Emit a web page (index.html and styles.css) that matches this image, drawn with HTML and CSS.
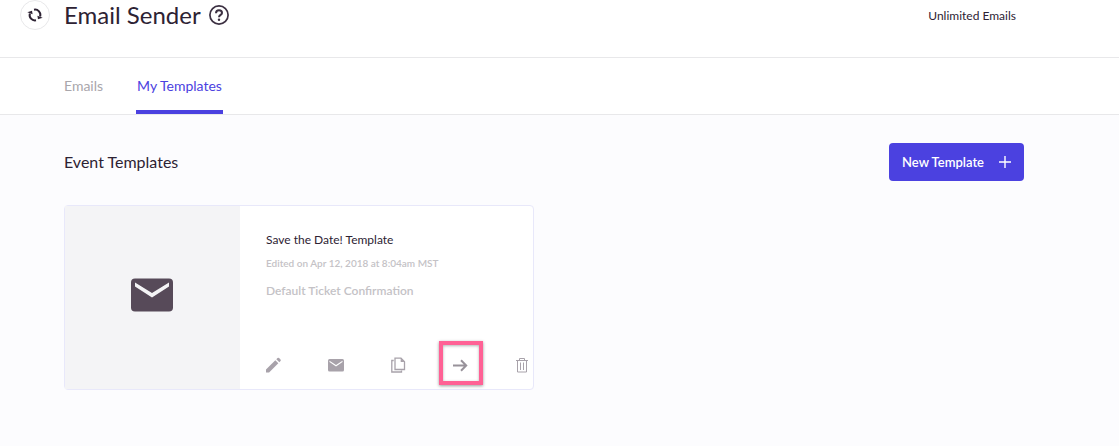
FILE: index.html
```html
<!DOCTYPE html>
<html lang="en">
<head>
    <meta charset="UTF-8">
    <meta name="viewport" content="width=device-width, initial-scale=1.0">
    <title>Email Sender</title>
    <link rel="stylesheet" href="styles.css">
</head>
<body>
    <!-- Header -->
    <header class="header">
        <button class="refresh-btn" aria-label="Refresh">
            <svg width="16" height="14" viewBox="0 0 16 14" fill="none" stroke="#2d2233" stroke-width="2">
                <path d="M9 12.300A5.300 5.300 0 0 1 2.900 5.500"/>
                <path d="M7 1.700A5.300 5.300 0 0 1 13.100 8.500"/>
                <path d="M.3 4.300 5 2.800 5.600 6.300z" fill="#2d2233" stroke="none"/>
                <path d="M15.700 9.700 11 11.200 10.400 7.700z" fill="#2d2233" stroke="none"/>
            </svg>
        </button>
        <h1>Email Sender</h1>
        <button class="help-btn" aria-label="Help">
            <svg width="20" height="20" viewBox="0 0 20 20" fill="none" stroke="#3c3042">
                <circle cx="10" cy="10" r="9.100" stroke-width="1.700"/>
                <path d="M7 8.200C7 6.200 8.300 5.300 10 5.300S13 6.300 13 7.900C13 9.800 10 10 10 12.200" stroke-width="2"/>
                <circle cx="10" cy="14.700" r="1.200" fill="#3c3042" stroke="none"/>
            </svg>
        </button>
        <span class="quota">Unlimited Emails</span>
    </header>

    <!-- Tabs -->
    <nav class="tabs">
        <a href="#emails">Emails</a>
        <a href="#templates" class="active">My Templates</a>
    </nav>

    <!-- Templates -->
    <main class="content">
        <div class="content-top">
            <h2>Event Templates</h2>
            <button class="new-btn">
                New Template
                <svg width="12" height="12" viewBox="0 0 12 12" stroke="#fff" stroke-width="1.400">
                    <path d="M6 0v12M0 6h12"/>
                </svg>
            </button>
        </div>

        <article class="card">
            <div class="card-preview">
                <svg width="42" height="34" viewBox="0 0 42 34">
                    <rect y=".5" width="42" height="33" rx="4" fill="#574a59"/>
                    <path d="M4 4.500 21 15 38 4.500V8.500L21 19.500 4 8.500z" fill="#f4f4f6"/>
                </svg>
            </div>
            <div class="card-body">
                <h3>Save the Date! Template</h3>
                <p class="edited">Edited on Apr 12, 2018 at 8:04am MST</p>
                <p class="type">Default Ticket Confirmation</p>
                <div class="actions">
                    <button aria-label="Edit">
                        <svg width="16" height="16" viewBox="0 0 16 16" fill="#a8a2aa">
                            <path d="M0 12.400 9.300 3.200 12.300 6.200 3.100 15.500H0z"/>
                            <path d="M10.300 2.200 11.500 1Q12.300.3 13.100 1L14.500 2.400Q15.200 3.200 14.500 4L13.300 5.200z"/>
                        </svg>
                    </button>
                    <button aria-label="Send">
                        <svg width="16" height="16" viewBox="0 0 16 16">
                            <rect x="0" y="2" width="16" height="12.500" rx="1.500" fill="#a8a2aa"/>
                            <path d="M1.500 3.700 8 8 14.500 3.700V5L8 9.400 1.500 5z" fill="#fff"/>
                        </svg>
                    </button>
                    <button aria-label="Duplicate">
                        <svg width="16" height="16" viewBox="0 0 16 16" fill="none" stroke="#a8a2aa" stroke-width="1.300">
                            <path d="M5 1.200H11L14.500 4.700V12.500H5z"/>
                            <path d="M10.700 1.200 14.500 5H10.700z" fill="#a8a2aa" stroke="none"/>
                            <path d="M3.700 3.500H1.800V15H11.500V13.500"/>
                        </svg>
                    </button>
                    <button class="highlighted" aria-label="Move">
                        <svg width="16" height="16" viewBox="0 0 16 16" fill="none" stroke="#98929a" stroke-width="2">
                            <path d="M1 8.500H14M9 3.300 14.200 8.500 9 13.700"/>
                        </svg>
                    </button>
                    <button aria-label="Delete">
                        <svg width="16" height="16" viewBox="0 0 16 16" fill="none" stroke="#a8a2aa">
                            <path d="M2 3.500H14M5.500 3V1.500H10.500V3M3.500 4V15H12.500V4M6.500 5.500V13M9.500 5.500V13"/>
                        </svg>
                    </button>
                </div>
            </div>
        </article>
    </main>
</body>
</html>
```

FILE: styles.css
```css
* {
    box-sizing: border-box;
}

body {
    margin: 0;
    min-height: 100vh;
    background: #fcfcfe;
    color: #2d2233;
    font-family: Lato, "Liberation Sans", sans-serif;
}

h1,
h2,
h3,
p {
    margin: 0;
    font-weight: 400;
}

button {
    padding: 0;
    border: none;
    background: none;
    font-family: inherit;
    cursor: pointer;
}

svg {
    display: block;
}

/* Header */
.header {
    display: flex;
    align-items: center;
    padding: 0 103px 27px 20px;
    background: #fff;
    border-bottom: 1px solid #e8e8ea;
}

.refresh-btn {
    display: flex;
    align-items: center;
    justify-content: center;
    width: 30px;
    height: 30px;
    border: 1px solid #e8e8ea;
    border-radius: 50%;
}

.header h1 {
    margin: 0 8px 0 14px;
    font-size: 24px;
    line-height: 30px;
}

.quota {
    margin-left: auto;
    font-size: 12px;
}

/* Tabs */
.tabs {
    display: flex;
    gap: 32px;
    padding: 0 63px;
    background: #fff;
    border-bottom: 1px solid #e8e8ea;
}

.tabs a {
    padding: 18px 1px 14px;
    border-bottom: 4px solid transparent;
    color: #a9a6ab;
    font-size: 14px;
    line-height: 20px;
    text-decoration: none;
}

.tabs .active {
    border-color: #4b41e0;
    color: #4b41e0;
}

/* Templates */
.content {
    padding: 28px 95px 56px 64px;
}

.content-top {
    display: flex;
    align-items: center;
    justify-content: space-between;
    margin-bottom: 24px;
}

.content-top h2 {
    font-size: 16px;
    line-height: 20px;
}

.new-btn {
    display: flex;
    align-items: center;
    gap: 15px;
    height: 38px;
    padding: 0 13px;
    border-radius: 4px;
    background: #4b41e0;
    color: #fff;
    font-size: 13px;
    font-weight: 600;
}

/* Template card */
.card {
    display: flex;
    max-width: 470px;
    background: #fff;
    border: 1px solid #e8e8fa;
    border-radius: 4px;
}

.card-preview {
    display: flex;
    align-items: center;
    justify-content: center;
    flex: 0 0 175px;
    padding: 0 2px 5px 0;
    background: #f4f4f6;
}

.card-body {
    flex: 1;
    padding: 24px 3px 16px 26px;
}

.card h3 {
    font-size: 12px;
    line-height: 20px;
}

.edited {
    margin-top: 3px;
    color: #c4c2c6;
    font-size: 10px;
    font-weight: 600;
    line-height: 20px;
}

.type {
    margin-top: 8px;
    color: #c4c2c6;
    font-size: 12px;
    font-weight: 600;
    line-height: 20px;
}

.actions {
    display: flex;
    justify-content: space-between;
    margin-top: 56px;
}

.highlighted {
    position: relative;
}

/* Pink frame over the move action */
.highlighted::after {
    content: "";
    position: absolute;
    inset: -16px -15px -12px -13px;
    border: 4px solid #ff6195;
    box-shadow: 0 1px 3px rgba(0, 0, 0, 0.4), inset 0 1px 3px rgba(0, 0, 0, 0.3);
}
```
